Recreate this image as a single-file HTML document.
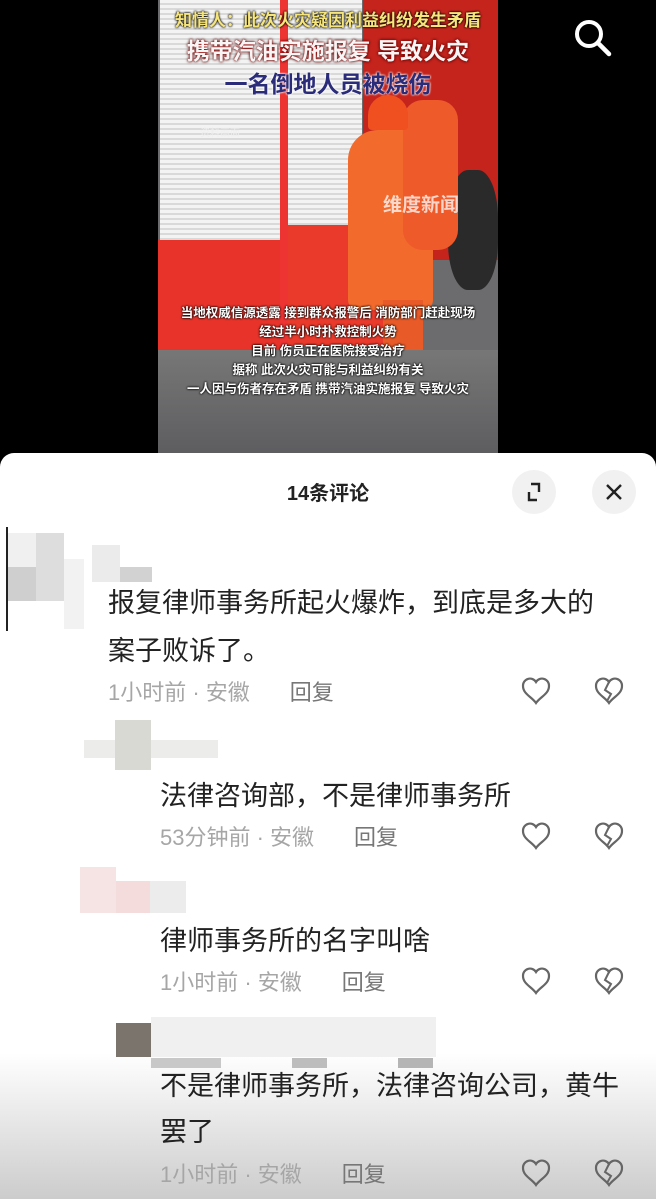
<!DOCTYPE html>
<html><head><meta charset="utf-8"><style>
*{margin:0;padding:0;box-sizing:border-box}
body{width:656px;height:1199px;background:#000;position:relative;overflow:hidden;font-family:"Liberation Sans","Noto Sans CJK SC",sans-serif}
.a{position:absolute}
.v{left:158px;top:0;width:340px;height:455px;background:#6c6c6e;overflow:hidden}
.sh{background:repeating-linear-gradient(#f3f3f3 0 3px,#d9d9d9 3px 5px)}
.cap{position:absolute;left:0;width:340px;text-align:center;font-weight:bold;color:#fff;white-space:nowrap;text-shadow:0 0 2px #000,0 0 2px #000}
.sheet{left:0;top:453px;width:656px;height:746px;background:linear-gradient(#fff 0,#fff 600px,#ccc 746px);border-radius:14px 14px 0 0}
.t{position:absolute;font-size:27px;color:#222;white-space:nowrap;line-height:32px}
.m{position:absolute;font-size:22px;color:#a6a6a6;white-space:nowrap;line-height:26px}
.m span{color:#777;margin-left:40px}
.px{position:absolute}
</style></head><body>
<div class="a v">
 <div class="a sh" style="left:2px;top:0;width:120px;height:240px"></div>
 <div class="a sh" style="left:128px;top:0;width:76px;height:225px"></div>
 <div class="a" style="left:0;top:240px;width:130px;height:110px;background:#e8332a"></div>
 <div class="a" style="left:122px;top:0;width:8px;height:350px;background:#e33"></div>
 <div class="a" style="left:130px;top:225px;width:100px;height:120px;background:#ea3a2c"></div>
 <div class="a" style="left:205px;top:0;width:135px;height:260px;background:#c5241d"></div>
 <div class="a" style="left:290px;top:170px;width:50px;height:120px;background:#2a2a2a;border-radius:40%"></div>
 <div class="a" style="left:190px;top:130px;width:85px;height:180px;background:#f26a2c;border-radius:30px 30px 10px 10px"></div>
 <div class="a" style="left:245px;top:100px;width:55px;height:150px;background:#ee5a2a;border-radius:20px"></div>
 <div class="a" style="left:210px;top:95px;width:40px;height:35px;background:#f05020;border-radius:20px 20px 4px 4px"></div>
 <div class="a" style="left:225px;top:300px;width:40px;height:60px;background:#e85a28"></div>
 <div class="a" style="left:0;top:350px;width:340px;height:105px;background:linear-gradient(#777,#5d5d60)"></div>
 <div class="cap" style="top:6px;font-size:17px;color:#f6e57a">知情人：此次火灾疑因利益纠纷发生矛盾</div>
 <div class="cap" style="top:32px;font-size:23px;color:#f6f6f6;text-shadow:0 0 2px #c00,0 0 3px #000">携带汽油实施报复 导致火灾</div>
 <div class="cap" style="top:65px;font-size:23px;color:#2a2c7a;text-shadow:0 0 2px #fff,0 0 2px #fff">一名倒地人员被烧伤</div>
 <div class="a" style="left:42px;top:124px;font-size:10px;color:#eee">资料画面</div>
 <div class="a" style="left:225px;top:190px;font-size:19px;color:rgba(255,255,255,.75);font-weight:bold">维度新闻</div>
 <div class="cap" style="top:304px;font-size:12.5px;line-height:19px">当地权威信源透露 接到群众报警后 消防部门赶赴现场<br>经过半小时扑救控制火势<br>目前 伤员正在医院接受治疗<br>据称 此次火灾可能与利益纠纷有关<br>一人因与伤者存在矛盾 携带汽油实施报复 导致火灾</div>
</div>
<svg class="a" style="left:572px;top:17px" width="44" height="40" viewBox="0 0 44 40"><circle cx="17" cy="17" r="12" fill="none" stroke="#fff" stroke-width="4"/><path d="M26 26L37 37" stroke="#fff" stroke-width="4.5" stroke-linecap="round"/></svg>

<div class="a sheet">
 <div class="a" style="left:0;top:24px;width:656px;text-align:center;font-size:20px;font-weight:bold;color:#222">14条评论</div>
 <div class="a" style="left:512px;top:17px;width:44px;height:44px;border-radius:50%;background:#f1f1f1"></div>
 <svg class="a" style="left:512px;top:17px" width="44" height="44" viewBox="0 0 44 44"><path d="M17 22v8h8M27 22v-8h-8" fill="none" stroke="#222" stroke-width="2.4"/></svg>
 <div class="a" style="left:592px;top:17px;width:44px;height:44px;border-radius:50%;background:#f1f1f1"></div>
 <svg class="a" style="left:592px;top:17px" width="44" height="44" viewBox="0 0 44 44"><path d="M15 15L29 29M29 15L15 29" stroke="#222" stroke-width="2.4"/></svg>

 <div class="px" style="left:6px;top:74px;width:2px;height:104px;background:#222"></div>
 <div class="px" style="left:8px;top:80px;width:28px;height:34px;background:#f0f0f0"></div>
 <div class="px" style="left:36px;top:80px;width:28px;height:68px;background:#ddd"></div>
 <div class="px" style="left:8px;top:114px;width:28px;height:34px;background:#cfcfcf"></div>
 <div class="px" style="left:64px;top:106px;width:20px;height:70px;background:#f2f2f2"></div>
 <div class="px" style="left:92px;top:92px;width:28px;height:37px;background:#ebebeb"></div>
 <div class="px" style="left:120px;top:114px;width:32px;height:15px;background:#d2d2d2"></div>
 <div class="t" style="left:108px;top:134px">报复律师事务所起火爆炸，到底是多大的</div>
 <div class="t" style="left:108px;top:182px">案子败诉了。</div>
 <div class="m" style="left:108px;top:227px">1小时前 · 安徽<span>回复</span></div>

 <div class="px" style="left:84px;top:287px;width:134px;height:18px;background:#ececea"></div>
 <div class="px" style="left:115px;top:267px;width:36px;height:50px;background:#d8d9d2"></div>
 <div class="t" style="left:160px;top:327px">法律咨询部，不是律师事务所</div>
 <div class="m" style="left:160px;top:372px">53分钟前 · 安徽<span>回复</span></div>

 <div class="px" style="left:80px;top:414px;width:36px;height:46px;background:#f6e4e4"></div>
 <div class="px" style="left:116px;top:428px;width:34px;height:32px;background:#f4dcdc"></div>
 <div class="px" style="left:150px;top:428px;width:36px;height:32px;background:#ececec"></div>
 <div class="t" style="left:160px;top:472px">律师事务所的名字叫啥</div>
 <div class="m" style="left:160px;top:517px">1小时前 · 安徽<span>回复</span></div>

 <div class="px" style="left:116px;top:570px;width:35px;height:34px;background:#7b746c"></div>
 <div class="px" style="left:151px;top:564px;width:285px;height:40px;background:#f0f0f0"></div>
 <div class="px" style="left:151px;top:605px;width:70px;height:10px;background:#c8c8c8"></div>
 <div class="px" style="left:292px;top:605px;width:35px;height:10px;background:#bdbdbd"></div>
 <div class="px" style="left:398px;top:605px;width:35px;height:10px;background:#b5b5b5"></div>
 <div class="t" style="left:160px;top:617px">不是律师事务所，法律咨询公司，黄牛</div>
 <div class="t" style="left:160px;top:663px">罢了</div>
 <div class="m" style="left:160px;top:709px">1小时前 · 安徽<span>回复</span></div>
</div>

<svg class="a" style="left:0;top:0" width="656" height="1199">
<defs>
<path id="h" d="M0 8C-4 2-13 -1-13 -9A7 7 0 0 1 0 -13A7 7 0 0 1 13 -9C13 -1 4 2 0 8Z" fill="none" stroke="#666" stroke-width="2.2"/>
<g id="b"><use href="#h"/><path d="M0 -13L-4 -5L2 -1L-2 6" fill="none" stroke="#666" stroke-width="2"/></g>
</defs>
<use href="#h" x="536" y="695"/><use href="#b" x="609" y="695"/>
<use href="#h" x="536" y="840"/><use href="#b" x="609" y="840"/>
<use href="#h" x="536" y="985"/><use href="#b" x="609" y="985"/>
<use href="#h" x="536" y="1177"/><use href="#b" x="609" y="1177"/>
</svg>
</body></html>
